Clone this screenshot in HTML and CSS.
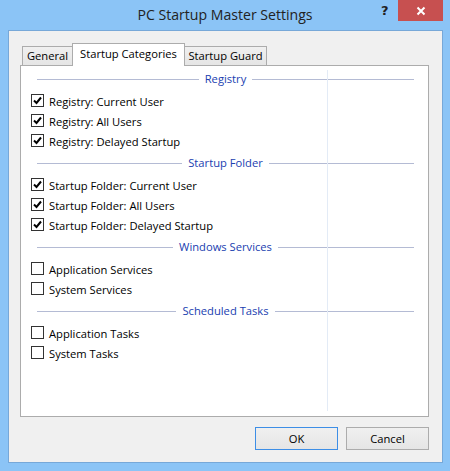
FILE: index.html
```html
<!DOCTYPE html>
<html>
<head>
<meta charset="utf-8">
<link rel="stylesheet" href="styles.css">
</head>
<body>
<div class="window">
  <div class="titlebar">
    <div class="title">PC Startup Master Settings</div>
    <div class="help">?</div>
    <div class="close">
      <svg width="10" height="10" viewBox="0 0 10 10"><path d="M1.5 1.5 L8.5 8.5 M8.5 1.5 L1.5 8.5" stroke="#fff" stroke-width="2" fill="none"/></svg>
    </div>
  </div>
  <div class="client">
    <div class="tabs">
      <div class="tab tab-general">General</div>
      <div class="tab tab-active">Startup Categories</div>
      <div class="tab tab-guard">Startup Guard</div>
    </div>
    <div class="panel">
      <div class="vline"></div>
      <div class="sec-head"><span>Registry</span></div>
      <div class="row"><span class="cb checked"><svg viewBox="0 0 11 11"><path d="M2 5.5 L4.5 8 L9 2.5" stroke="#000" stroke-width="2" fill="none"/></svg></span>Registry: Current User</div>
      <div class="row"><span class="cb checked"><svg viewBox="0 0 11 11"><path d="M2 5.5 L4.5 8 L9 2.5" stroke="#000" stroke-width="2" fill="none"/></svg></span>Registry: All Users</div>
      <div class="row"><span class="cb checked"><svg viewBox="0 0 11 11"><path d="M2 5.5 L4.5 8 L9 2.5" stroke="#000" stroke-width="2" fill="none"/></svg></span>Registry: Delayed Startup</div>
      <div class="sec-head"><span>Startup Folder</span></div>
      <div class="row"><span class="cb checked"><svg viewBox="0 0 11 11"><path d="M2 5.5 L4.5 8 L9 2.5" stroke="#000" stroke-width="2" fill="none"/></svg></span>Startup Folder: Current User</div>
      <div class="row"><span class="cb checked"><svg viewBox="0 0 11 11"><path d="M2 5.5 L4.5 8 L9 2.5" stroke="#000" stroke-width="2" fill="none"/></svg></span>Startup Folder: All Users</div>
      <div class="row"><span class="cb checked"><svg viewBox="0 0 11 11"><path d="M2 5.5 L4.5 8 L9 2.5" stroke="#000" stroke-width="2" fill="none"/></svg></span>Startup Folder: Delayed Startup</div>
      <div class="sec-head"><span>Windows Services</span></div>
      <div class="row"><span class="cb"></span>Application Services</div>
      <div class="row"><span class="cb"></span>System Services</div>
      <div class="sec-head"><span>Scheduled Tasks</span></div>
      <div class="row"><span class="cb"></span>Application Tasks</div>
      <div class="row"><span class="cb"></span>System Tasks</div>
    </div>
    <div class="buttons">
      <div class="btn btn-default">OK</div>
      <div class="btn">Cancel</div>
    </div>
  </div>
</div>
</body>
</html>
```
FILE: styles.css
```css
html, body {
  margin: 0;
  padding: 0;
}
body {
  width: 450px;
  height: 471px;
  overflow: hidden;
  font-family: "Segoe UI", "Open Sans", "Noto Sans", sans-serif;
  font-size: 11.2px;
  color: #000;
}
.window {
  width: 450px;
  height: 471px;
  background: #8bc4f6;
  box-sizing: border-box;
  padding: 0 7px 0 8px;
}
.titlebar {
  position: relative;
  height: 30px;
}
.title {
  text-align: center;
  font-size: 14.1px;
  line-height: 30px;
  color: #222;
  margin-left: -8px;
  margin-right: -7px;
}
.help {
  position: absolute;
  left: 373px;
  top: 3px;
  font-family: "DejaVu Sans", sans-serif;
  font-weight: bold;
  font-size: 13px;
  color: #222;
}
.close {
  position: absolute;
  left: 390px;
  top: 0;
  width: 45px;
  height: 21px;
  background: #c75050;
  display: flex;
  align-items: center;
  justify-content: center;
}
.close svg {
  display: block;
}
.client {
  height: 433px;
  box-sizing: border-box;
  border: 1px solid #77a8d8;
  background: #f0f0f0;
}
.tabs {
  display: flex;
  align-items: flex-end;
  height: 22px;
  margin-top: 12px;
  padding-left: 13px;
}
.tab {
  box-sizing: border-box;
  height: 19px;
  border: 1px solid #acacac;
  border-bottom: none;
  background: linear-gradient(#f0f0f0, #e5e5e5);
  text-align: center;
  line-height: 18px;
  white-space: nowrap;
}
.tab-general {
  width: 51px;
}
.tab-active {
  position: relative;
  z-index: 2;
  width: 113px;
  height: 23px;
  margin-left: -1px;
  margin-bottom: -1px;
  background: #fff;
  line-height: 19px;
}
.tab-guard {
  width: 83px;
  margin-left: -1px;
}
.panel {
  position: relative;
  box-sizing: border-box;
  width: 409px;
  height: 352px;
  margin-left: 11px;
  border: 1px solid #acacac;
  background: #fff;
  padding-top: 1px;
}
.vline {
  position: absolute;
  left: 306px;
  top: 4px;
  bottom: 5px;
  width: 1px;
  background: #e3ebf6;
}
.sec-head {
  display: flex;
  align-items: center;
  height: 24px;
  padding: 0 14px 0 16px;
  color: #2040b0;
}
.sec-head::before,
.sec-head::after {
  content: "";
  flex: 1;
  height: 1px;
  background: #b4bbd4;
}
.sec-head span {
  margin: 0 6px;
  line-height: 16px;
}
.row {
  display: flex;
  align-items: center;
  height: 20px;
  padding-left: 10px;
  white-space: nowrap;
}
.cb {
  box-sizing: border-box;
  width: 13px;
  height: 13px;
  border: 1px solid #333;
  background: #fff;
  margin-right: 5px;
  flex: none;
  position: relative;
  top: -1px;
}
.cb svg {
  display: block;
  width: 11px;
  height: 11px;
}
.buttons {
  display: flex;
  justify-content: flex-end;
  gap: 8px;
  margin-top: 10px;
  padding-right: 13px;
}
.btn {
  box-sizing: border-box;
  width: 83px;
  height: 23px;
  border: 1px solid #acacac;
  background: linear-gradient(#f0f0f0, #e5e5e5);
  text-align: center;
  line-height: 21px;
}
.btn-default {
  border-color: #3d8ee6;
}
```
